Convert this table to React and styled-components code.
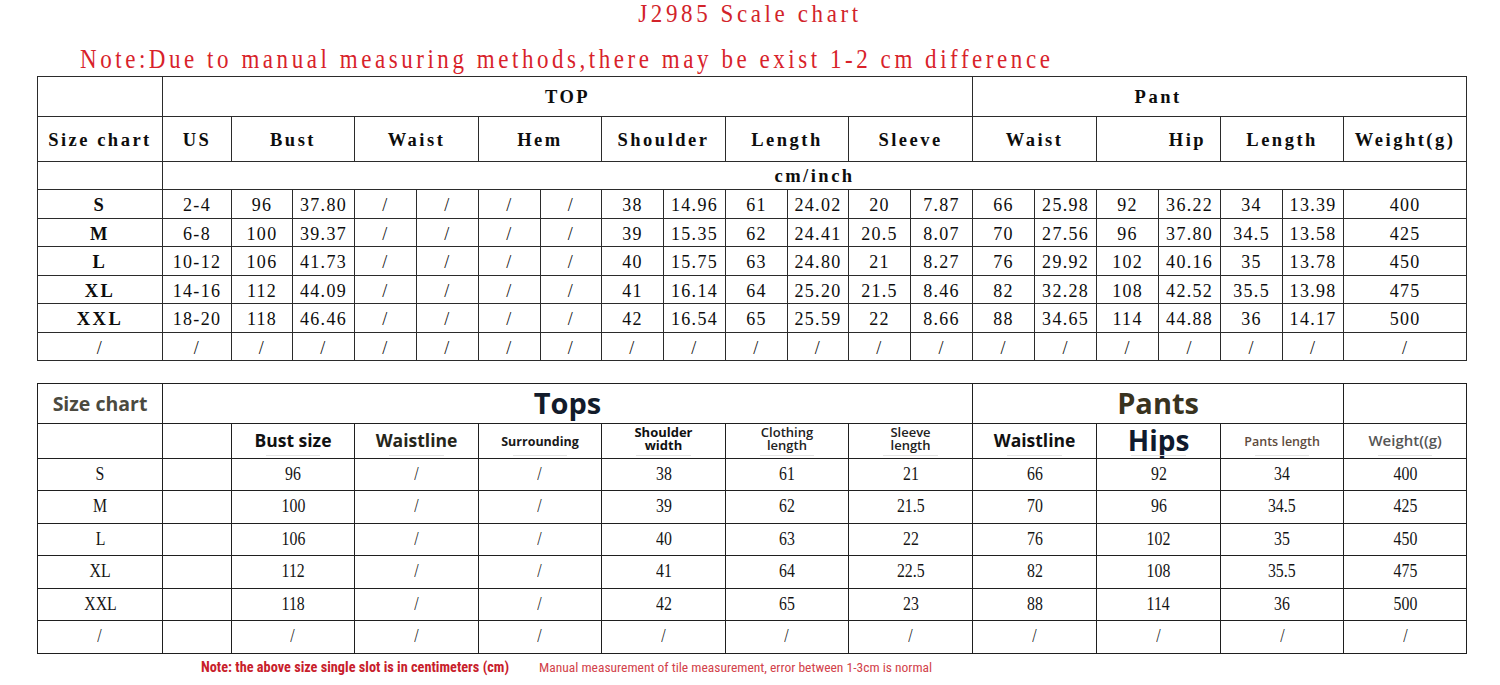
import React from "react";
import styled, { createGlobalStyle } from "styled-components";

const GlobalStyle = createGlobalStyle`
  html, body { margin: 0; padding: 0; background: #ffffff; }
  body { font-family: "Liberation Serif", serif; }
`;

const Page = styled.div`
  width: 1500px;
  height: 685px;
  display: flex;
  flex-direction: column;
  overflow: hidden;
  background: #fff;
`;

const Title = styled.div`
  height: 28px;
  line-height: 28px;
  text-align: center;
  font-family: "Liberation Serif", serif;
  font-size: 23px;
  letter-spacing: 3.6px;
  color: #d2232a;
  transform: scaleY(1.1);
  white-space: nowrap;
`;

const Note = styled.div`
  margin: 20px 0 4px 80px;
  height: 24px;
  line-height: 24px;
  font-family: "Liberation Serif", serif;
  font-size: 23px;
  letter-spacing: 3.55px;
  color: #d8222a;
  transform: scaleY(1.15);
  transform-origin: left center;
  white-space: nowrap;
`;

const Table = styled.table`
  margin-left: 37px;
  width: 1429px;
  border-collapse: collapse;
  table-layout: fixed;
  margin-top: ${(p) => p.$top || 0}px;
`;

const Row = styled.tr`
  height: ${(p) => p.$h}px;
`;

const Cell = styled.td`
  border: 1px solid #2b2b2b;
  padding: ${(p) => p.$pt || 2}px ${(p) => p.$pr || 0}px 0 0;
  text-align: ${(p) => p.$align || "center"};
  vertical-align: middle;
  font-family: "Liberation Serif", serif;
  font-size: ${(p) => (p.$head ? 18.5 : 18)}px;
  letter-spacing: ${(p) => (p.$head ? 2.5 : 1.3)}px;
  font-weight: ${(p) => (p.$head ? 700 : 400)};
  color: #0d0d0d;
  white-space: nowrap;
`;

const Cell2 = styled.td`
  position: relative;
  border: 1px solid #1f1f1f;
  padding: 0;
  text-align: center;
  vertical-align: middle;
  font-family: "Liberation Serif", serif;
  font-size: 18px;
  color: #141414;
  white-space: nowrap;
  ${(p) =>
    p.$mark
      ? `&::after {
    content: "";
    position: absolute;
    left: 28%;
    right: 28%;
    bottom: 2px;
    height: 1px;
    background: #e3e3e3;
  }`
      : ""}
`;

const Narrow = styled.span`
  display: inline-block;
  transform: scaleX(0.88) scaleY(1.08);
`;

const HeadLabel = styled.span`
  display: inline-block;
  font-family: "Open Sans", "Noto Sans", sans-serif;
  font-size: ${(p) => p.$size}px;
  font-weight: ${(p) => p.$weight || 700};
  color: ${(p) => p.$color || "#111"};
  line-height: ${(p) => p.$lh || 1.2};
  white-space: nowrap;
`;

const Footer = styled.div`
  display: flex;
  align-items: center;
  gap: 30px;
  margin: 5px 0 0 201px;
  height: 16px;
  white-space: nowrap;
`;

const FootNote = styled.span`
  font-family: "Liberation Sans Narrow", "Roboto Condensed", "Liberation Sans", sans-serif;
  font-size: ${(p) => p.$size}px;
  font-weight: ${(p) => p.$weight};
  color: ${(p) => p.$color};
`;

const widths1 = [125, 69, 61, 62, 62, 62, 62, 61, 62, 62, 62, 61, 62, 62, 62, 62, 62, 62, 62, 61, 123];
const widths2 = [125, 69, 123, 124, 123, 124, 123, 124, 124, 124, 123, 123];

const rows1 = [
  ["S", "2-4", "96", "37.80", "/", "/", "/", "/", "38", "14.96", "61", "24.02", "20", "7.87", "66", "25.98", "92", "36.22", "34", "13.39", "400"],
  ["M", "6-8", "100", "39.37", "/", "/", "/", "/", "39", "15.35", "62", "24.41", "20.5", "8.07", "70", "27.56", "96", "37.80", "34.5", "13.58", "425"],
  ["L", "10-12", "106", "41.73", "/", "/", "/", "/", "40", "15.75", "63", "24.80", "21", "8.27", "76", "29.92", "102", "40.16", "35", "13.78", "450"],
  ["XL", "14-16", "112", "44.09", "/", "/", "/", "/", "41", "16.14", "64", "25.20", "21.5", "8.46", "82", "32.28", "108", "42.52", "35.5", "13.98", "475"],
  ["XXL", "18-20", "118", "46.46", "/", "/", "/", "/", "42", "16.54", "65", "25.59", "22", "8.66", "88", "34.65", "114", "44.88", "36", "14.17", "500"],
  Array(21).fill("/"),
];

const rows2 = [
  ["S", "", "96", "/", "/", "38", "61", "21", "66", "92", "34", "400"],
  ["M", "", "100", "/", "/", "39", "62", "21.5", "70", "96", "34.5", "425"],
  ["L", "", "106", "/", "/", "40", "63", "22", "76", "102", "35", "450"],
  ["XL", "", "112", "/", "/", "41", "64", "22.5", "82", "108", "35.5", "475"],
  ["XXL", "", "118", "/", "/", "42", "65", "23", "88", "114", "36", "500"],
  ["/", "", "/", "/", "/", "/", "/", "/", "/", "/", "/", "/"],
];

const heads1 = [
  { t: "Size chart" },
  { t: "US" },
  { t: "Bust", span: 2 },
  { t: "Waist", span: 2 },
  { t: "Hem", span: 2 },
  { t: "Shoulder", span: 2 },
  { t: "Length", span: 2 },
  { t: "Sleeve", span: 2 },
  { t: "Waist", span: 2 },
  { t: "Hip", span: 2, align: "right", pr: 14 },
  { t: "Length", span: 2 },
  { t: "Weight(g)" },
];

const heads2 = [
  null,
  null,
  { t: ["Bust size"], size: 17.5 },
  { t: ["Waistline"], size: 17.5, color: "#26261a" },
  { t: ["Surrounding"], size: 12.5, color: "#1a1a1a" },
  { t: ["Shoulder", "width"], size: 13, lh: 1.0 },
  { t: ["Clothing", "length"], size: 13, weight: 600, lh: 1.0, color: "#222" },
  { t: ["Sleeve", "length"], size: 13, weight: 600, lh: 1.0, color: "#222" },
  { t: ["Waistline"], size: 17.5, color: "#111" },
  { t: ["Hips"], size: 28, color: "#0f1a2e" },
  { t: ["Pants length"], size: 12.5, weight: 600, color: "#5e4a3c" },
  { t: ["Weight((g)"], size: 15, weight: 600, color: "#555" },
];

const ScaleTable = () => (
  <Table>
    <colgroup>
      {widths1.map((w, i) => (
        <col key={i} style={{ width: w }} />
      ))}
    </colgroup>
    <tbody>
      <Row $h={40}>
        <Cell />
        <Cell $head colSpan={13}>TOP</Cell>
        <Cell $head colSpan={7} $pr={123}>Pant</Cell>
      </Row>
      <Row $h={45}>
        {heads1.map((h, i) => (
          <Cell key={i} $head colSpan={h.span || 1} $align={h.align} $pr={h.pr}>
            {h.t}
          </Cell>
        ))}
      </Row>
      <Row $h={28}>
        <Cell />
        <Cell $head colSpan={20}>cm/inch</Cell>
      </Row>
      {rows1.map((r, ri) => (
        <Row key={ri} $h={28.5}>
          {r.map((v, ci) => (
            <Cell key={ci} $pt={4} $head={ci === 0 && v !== "/"}>
              {v}
            </Cell>
          ))}
        </Row>
      ))}
    </tbody>
  </Table>
);

const CmTable = () => (
  <Table $top={22}>
    <colgroup>
      {widths2.map((w, i) => (
        <col key={i} style={{ width: w }} />
      ))}
    </colgroup>
    <tbody>
      <Row $h={40}>
        <Cell2>
          <HeadLabel $size={19.5} $color="#4b4a3f">Size chart</HeadLabel>
        </Cell2>
        <Cell2 colSpan={7}>
          <HeadLabel $size={29} $color="#121b2b">Tops</HeadLabel>
        </Cell2>
        <Cell2 colSpan={3}>
          <HeadLabel $size={29} $color="#39331f">Pants</HeadLabel>
        </Cell2>
        <Cell2 />
      </Row>
      <Row $h={34}>
        {heads2.map((h, i) =>
          h ? (
            <Cell2 key={i} $mark>
              <HeadLabel $size={h.size} $weight={h.weight} $color={h.color} $lh={h.lh}>
                {h.t.map((line, li) => (
                  <React.Fragment key={li}>
                    {li > 0 && <br />}
                    {line}
                  </React.Fragment>
                ))}
              </HeadLabel>
            </Cell2>
          ) : (
            <Cell2 key={i} />
          )
        )}
      </Row>
      {rows2.map((r, ri) => (
        <Row key={ri} $h={32.5}>
          {r.map((v, ci) => (
            <Cell2 key={ci}>
              <Narrow>{v}</Narrow>
            </Cell2>
          ))}
        </Row>
      ))}
    </tbody>
  </Table>
);

export default function App() {
  return (
    <>
      <GlobalStyle />
      <Page>
        <Title>J2985 Scale chart</Title>
        <Note>Note:Due to manual measuring methods,there may be exist 1-2 cm difference</Note>
        <ScaleTable />
        <CmTable />
        <Footer>
          <FootNote $size={14.3} $weight={700} $color="#c8202b">
            Note: the above size single slot is in centimeters (cm)
          </FootNote>
          <FootNote $size={13.5} $weight={400} $color="#d2424a">
            Manual measurement of tile measurement, error between 1-3cm is normal
          </FootNote>
        </Footer>
      </Page>
    </>
  );
}
